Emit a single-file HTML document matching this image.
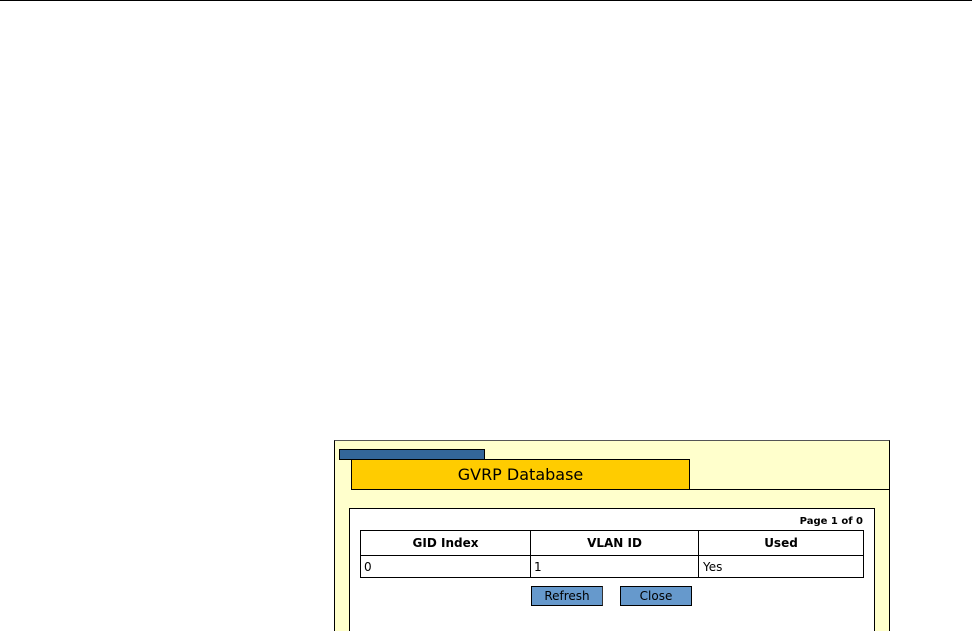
<!DOCTYPE html>
<html style="height:631px;overflow:hidden"><head><style>
body{margin:0;width:972px;height:631px;background:#fff;position:relative;overflow:hidden;font-family:"DejaVu Sans","Liberation Sans",sans-serif}
div{position:absolute;box-sizing:border-box}
.t{font-size:12px;font-weight:bold;text-align:center;line-height:24px}
</style></head><body>
<div style="left:0;top:0;width:972px;height:1px;background:#000"></div>
<div style="left:334px;top:440px;width:556px;height:200px;background:#ffffcc;border:1px solid #000;border-top-color:#555"></div>
<div style="left:339px;top:449px;width:146px;height:11px;background:#336699;border:1px solid #000"></div>
<div style="left:351px;top:459px;width:339px;height:31px;background:#ffcc00;border:1px solid #000;font-size:16px;text-align:center;line-height:29px">GVRP Database</div>
<div style="left:689px;top:489px;width:200px;height:1px;background:#000"></div>
<div style="left:349px;top:508px;width:526px;height:140px;background:#fff;border:1px solid #000"></div>
<div style="left:700px;top:516px;width:163px;font-size:10px;font-weight:bold;text-align:right">Page 1 of 0</div>
<div style="left:360px;top:530px;width:504px;height:48px;border:1px solid #000"></div>
<div style="left:360px;top:555px;width:504px;height:1px;background:#000"></div>
<div style="left:530px;top:530px;width:1px;height:48px;background:#000"></div>
<div style="left:698px;top:530px;width:1px;height:48px;background:#000"></div>
<div class="t" style="left:361px;top:531px;width:169px">GID Index</div>
<div class="t" style="left:531px;top:531px;width:167px">VLAN ID</div>
<div class="t" style="left:699px;top:531px;width:164px">Used</div>
<div style="left:364px;top:560px;font-size:12px">0</div>
<div style="left:534px;top:560px;font-size:12px">1</div>
<div style="left:703px;top:560px;font-size:12px">Yes</div>
<div style="left:531px;top:586px;width:72px;height:20px;background:#6699cc;border:1px solid #000;border-right-color:#333;font-size:12px;text-align:center;line-height:18px">Refresh</div>
<div style="left:620px;top:586px;width:72px;height:20px;background:#6699cc;border:1px solid #000;font-size:12px;text-align:center;line-height:18px">Close</div>
</body></html>
